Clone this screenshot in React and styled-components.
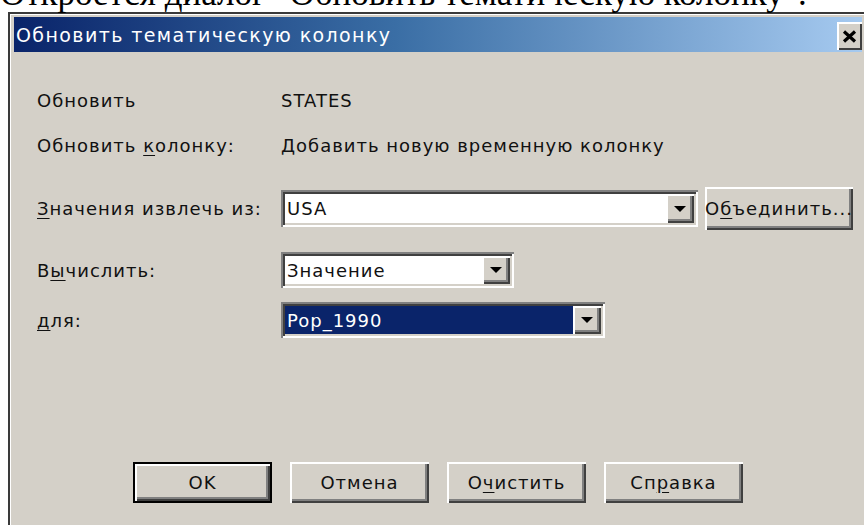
import styled, { createGlobalStyle } from "styled-components";

const GlobalStyle = createGlobalStyle`
  html, body {
    margin: 0;
    padding: 0;
    background: #fff;
    overflow: hidden;
  }
`;

const Page = styled.div`
  width: 864px;
  height: 525px;
  overflow: hidden;
`;

// line of the surrounding document, only its lower edge shows above the window
const Caption = styled.p`
  margin: -20px 0 0 0;
  height: 31px;
  font-family: "Liberation Serif", serif;
  font-size: 35px;
  line-height: 28px;
  white-space: nowrap;
  color: #000;
`;

const Window = styled.div`
  margin: 1px 0 0 8px;
  width: 860px;
  height: 540px;
  box-sizing: border-box;
  border: 2px solid #3a3a3a;
  padding: 3px 4px 0 4px;
  background: #d4d0c8;
  box-shadow: inset 1px 1px #fff;
  display: flex;
  flex-direction: column;
`;

const TitleBar = styled.div`
  height: 35px;
  flex: none;
  display: flex;
  align-items: center;
  justify-content: space-between;
  padding-left: 2px;
  background: linear-gradient(to right, #0a246a 0%, #3a6ea5 45%, #a6caf0 100%);
`;

const Title = styled.span`
  color: #fff;
  font-family: "DejaVu Sans", sans-serif;
  font-size: 19px;
  letter-spacing: 1.4px;
`;

const CloseButton = styled.button`
  width: 25px;
  height: 28px;
  margin-top: 3px;
  padding: 0;
  border: none;
  background: #d4d0c8;
  display: flex;
  align-items: center;
  justify-content: center;
  box-shadow: inset 2px 2px #fff, inset -2px -2px #404040;
`;

const Body = styled.div`
  flex: 1;
  padding: 33px 0 0 23px;
  display: flex;
  flex-direction: column;
  font-family: "DejaVu Sans", sans-serif;
  font-size: 18px;
  letter-spacing: 1px;
  color: #111;
`;

const Row = styled.div`
  display: flex;
  align-items: center;
  height: ${(p) => p.$h}px;
  margin-top: ${(p) => p.$top}px;
`;

const Label = styled.div`
  width: 244px;
  flex: none;
  white-space: nowrap;
`;

const Value = styled.div`
  white-space: nowrap;
`;

const Key = styled.span`
  text-decoration: underline;
  text-underline-offset: 3px;
`;

const Combo = styled.div`
  width: ${(p) => p.$w}px;
  height: ${(p) => p.$h || 36}px;
  box-sizing: border-box;
  padding: 4px;
  display: flex;
  background: #fff;
  box-shadow: inset 2px 2px #808080, inset -2px -2px #fff, inset 4px 4px #404040,
    inset -4px -4px #d4d0c8;
`;

const ComboText = styled.div`
  flex: 1;
  display: flex;
  align-items: center;
  padding-left: 2px;
  background: ${(p) => (p.$selected ? "#0a246a" : "#fff")};
  color: ${(p) => (p.$selected ? "#fff" : "#111")};
  white-space: nowrap;
`;

const DropButton = styled.div`
  width: 28px;
  flex: none;
  display: flex;
  align-items: center;
  justify-content: center;
  background: #d4d0c8;
  box-shadow: inset 2px 2px #fff, inset -2px -2px #404040, inset -4px -4px #808080;
`;

const Arrow = styled.span`
  width: 0;
  height: 0;
  border-left: 6px solid transparent;
  border-right: 6px solid transparent;
  border-top: 6px solid #000;
`;

const PushButton = styled.button`
  width: ${(p) => p.$w || 139}px;
  height: ${(p) => p.$h || 41}px;
  margin-left: ${(p) => p.$ml || 0}px;
  padding: 0;
  border: none;
  background: #d4d0c8;
  font-family: "DejaVu Sans", sans-serif;
  font-size: 18px;
  letter-spacing: 1px;
  color: #111;
  white-space: nowrap;
  box-shadow: ${(p) =>
    p.$default
      ? "inset 2px 2px #000, inset -2px -2px #000, inset 4px 4px #fff, inset -4px -4px #404040, inset -6px -6px #808080"
      : "inset 2px 2px #fff, inset -2px -2px #404040, inset -4px -4px #808080"};
`;

const ButtonRow = styled.div`
  margin-top: 124px;
  margin-left: -23px;
  display: flex;
  justify-content: center;
  gap: 18px;
`;

function ComboBox({ w, h, text, selected }) {
  return (
    <Combo $w={w} $h={h}>
      <ComboText $selected={selected}>{text}</ComboText>
      <DropButton>
        <Arrow />
      </DropButton>
    </Combo>
  );
}

export default function App() {
  return (
    <Page>
      <GlobalStyle />
      <Caption>Откроется диалог "Обновить тематическую колонку".</Caption>
      <Window>
        <TitleBar>
          <Title>Обновить тематическую колонку</Title>
          <CloseButton>
            <svg width="15" height="13" viewBox="0 0 15 13">
              <path d="M2 1.5 L13 11.5 M13 1.5 L2 11.5" stroke="#000" strokeWidth="3.2" />
            </svg>
          </CloseButton>
        </TitleBar>
        <Body>
          <Row $h={30} $top={0}>
            <Label>Обновить</Label>
            <Value>STATES</Value>
          </Row>
          <Row $h={30} $top={15}>
            <Label>
              Обновить <Key>к</Key>олонку:
            </Label>
            <Value>Добавить новую временную колонку</Value>
          </Row>
          <Row $h={43} $top={27}>
            <Label>
              <Key>З</Key>начения извлечь из:
            </Label>
            <ComboBox w={417} h={37} text="USA" />
            <PushButton $w={148} $h={43} $ml={7}>
              О<Key>б</Key>ъединить...
            </PushButton>
          </Row>
          <Row $h={36} $top={22}>
            <Label>
              В<Key>ы</Key>числить:
            </Label>
            <ComboBox w={233} text="Значение" />
          </Row>
          <Row $h={36} $top={14}>
            <Label>
              <Key>д</Key>ля:
            </Label>
            <ComboBox w={324} text="Pop_1990" selected />
          </Row>
          <ButtonRow>
            <PushButton $default>OK</PushButton>
            <PushButton>Отмена</PushButton>
            <PushButton>
              О<Key>ч</Key>истить
            </PushButton>
            <PushButton>
              Сп<Key>р</Key>авка
            </PushButton>
          </ButtonRow>
        </Body>
      </Window>
    </Page>
  );
}
